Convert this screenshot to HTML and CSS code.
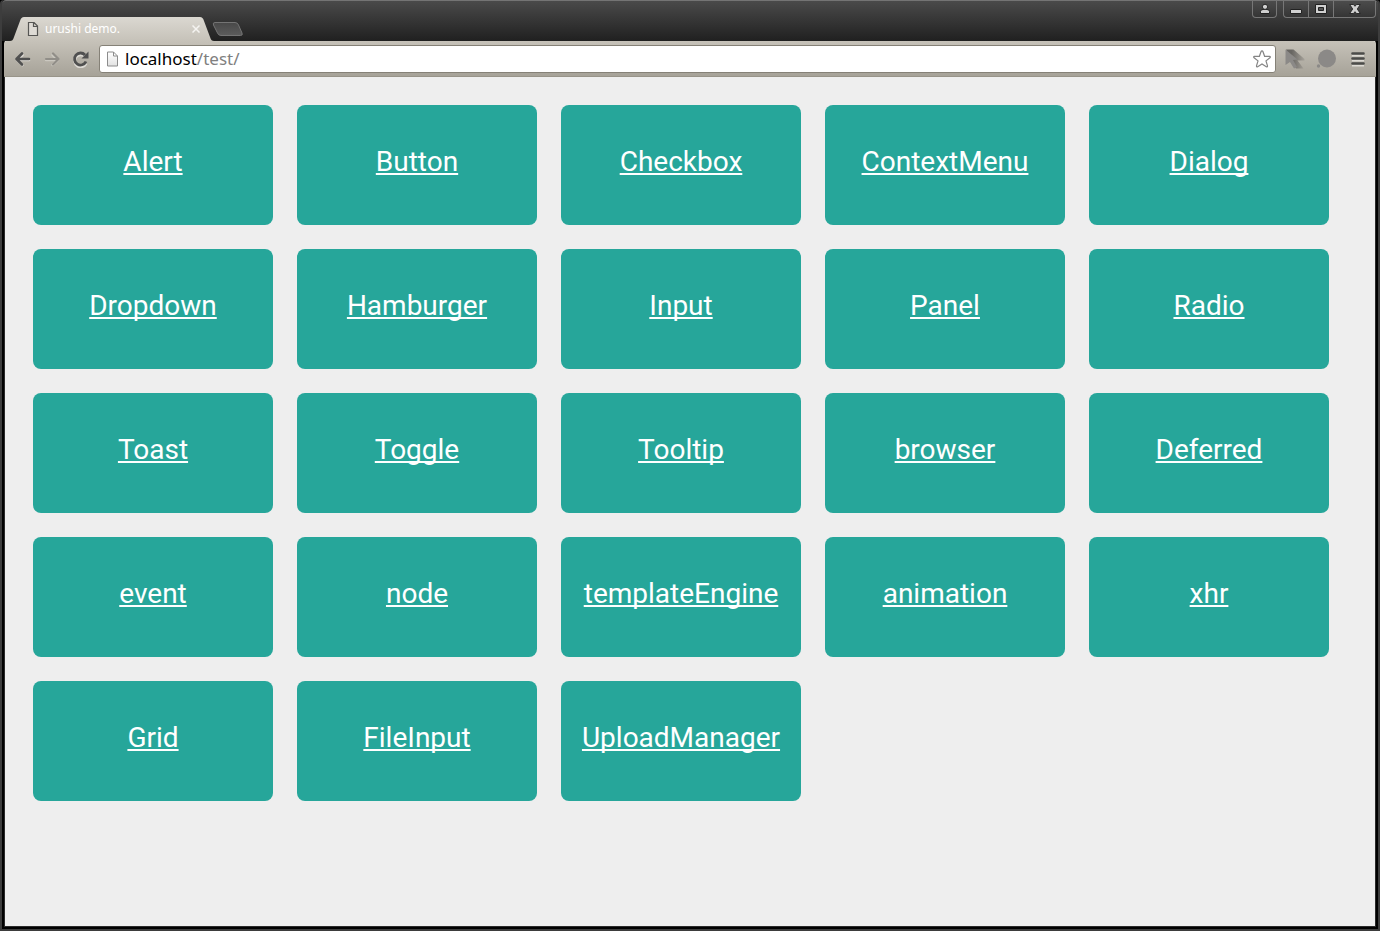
FILE: index.html
```html
<!DOCTYPE html>
<html lang="en">
<head>
<meta charset="utf-8">
<title>urushi demo.</title>
<link rel="stylesheet" href="styles.css">
</head>
<body>
<div class="window">
  <header class="titlebar">
    <div class="tab">
      <svg class="tab-shape" viewBox="0 0 204 24" preserveAspectRatio="none" aria-hidden="true">
        <defs><linearGradient id="tabfill" x1="0" y1="0" x2="0" y2="1"><stop offset="0" stop-color="#dbd8d1"/><stop offset="1" stop-color="#c6c2b9"/></linearGradient></defs>
        <path d="M0 24C2 24 3 23 4 20L10 4C11 1 12 0 14 0H190C192 0 193 1 194 4L200 20C201 23 202 24 204 24Z" fill="url(#tabfill)"/>
      </svg>
      <svg class="tab-icon" width="12" height="14" viewBox="0 0 12 14" aria-hidden="true"><path d="M1.500.5H7L10.500 4V13.500H1.500ZM6.500.5V4.500H10.500" fill="#dedbd5" stroke="#565654" stroke-width="1.200"/></svg>
      <span class="tab-title">urushi demo.</span>
      <button class="tab-close" aria-label="Close tab"><svg width="8" height="8" viewBox="0 0 8 8"><path d="M.5.5L7.500 7.500M7.500.5L.5 7.500" stroke="#f5f4f1" stroke-width="1.500"/></svg></button>
    </div>
    <button class="new-tab" aria-label="New tab"><svg width="32" height="16" viewBox="0 0 32 16"><defs><linearGradient id="newfill" x1="0" y1="0" x2="0" y2="1"><stop offset="0" stop-color="#484848"/><stop offset="1" stop-color="#5c5c5c"/></linearGradient></defs><path d="M3 1.500H23Q25.500 1.500 26.500 4L30 12Q31 14.500 28.500 14.500H9Q6.500 14.500 5.500 12L1.500 4Q.5 1.500 3 1.500Z" fill="url(#newfill)" stroke="#747474"/></svg></button>
    <div class="controls">
      <button class="control user" aria-label="User"><svg width="12" height="12" viewBox="0 0 12 12"><path d="M1.500 10.500V8.500Q1.500 6.500 4 6.500H8Q10.500 6.500 10.500 8.500V10.500Z" fill="#d0d0d0" stroke="#222"/><circle cx="6" cy="3.800" r="2.600" fill="#d0d0d0" stroke="#222"/></svg></button>
      <div class="control-group">
        <button class="control" aria-label="Minimize"><svg width="12" height="12" viewBox="0 0 12 12"><path d="M.5 6.500H11.500V10.500H.5Z" fill="#d0d0d0" stroke="#222"/></svg></button>
        <button class="control" aria-label="Maximize"><svg width="12" height="12" viewBox="0 0 12 12"><path d="M.5 1.500H11.500V10.500H.5Z" fill="#d0d0d0" stroke="#222"/><path d="M3.500 4.500H8.500V7.500H3.500Z" fill="#555" stroke="#222"/></svg></button>
        <button class="control close" aria-label="Close"><svg width="12" height="12" viewBox="0 0 12 12"><path d="M.7 1.500H4.500L6 3.300 7.500 1.500H11.300L8.300 6 11.300 10.500H7.500L6 8.700 4.500 10.500H.7L3.700 6Z" fill="#d0d0d0" stroke="#222" stroke-width=".9"/></svg></button>
      </div>
    </div>
  </header>
  <div class="browser">
    <nav class="toolbar" aria-label="Browser">
      <button class="tool" aria-label="Back"><svg width="18" height="18" viewBox="0 0 18 18"><g fill="none" stroke-linecap="round" stroke-linejoin="round"><path d="M8.500 5L3 10 8.500 15M3 10H15" stroke="#dedbd5" stroke-width="2.600"/><path d="M8 3.500L2.500 9 8 14.500M3 9H15" stroke="#505050" stroke-width="2.600"/></g></svg></button>
      <button class="tool" aria-label="Forward" disabled><svg width="18" height="18" viewBox="0 0 18 18"><g fill="none" stroke-linecap="round" stroke-linejoin="round"><path d="M9.500 5L15 10 9.500 15M15 10H3" stroke="#cbc8c0" stroke-width="2.400"/><path d="M10 3.500L15.500 9 10 14.500M15 9H3" stroke="#918e88" stroke-width="2.200"/></g></svg></button>
      <button class="tool" aria-label="Reload"><svg width="18" height="18" viewBox="0 0 18 18"><path d="M14 12.500A6 6 0 1 1 13 5.500" transform="translate(0 1)" fill="none" stroke="#dedbd5" stroke-width="3"/><path d="M14 11.500A6 6 0 1 1 13 5" fill="none" stroke="#505050" stroke-width="2.800"/><path d="M16.500 1.500V8.500H9.500Z" fill="#505050"/></svg></button>
      <form class="address">
        <svg width="13" height="16" viewBox="0 0 13 16" aria-hidden="true"><defs><linearGradient id="page" x1="0" y1="0" x2="0" y2="1"><stop offset="0" stop-color="#fff"/><stop offset="1" stop-color="#e2e2e2"/></linearGradient></defs><path d="M1.500 1H7.500L11.500 5V15H1.500ZM7.500 1V5H11.500" fill="url(#page)" stroke="#8c8c8c"/></svg>
        <a class="url" href="#">localhost<span class="path">/test/</span></a>
        <button class="star" type="button" aria-label="Bookmark"><svg width="20" height="20" viewBox="0 0 20 20"><path d="M10 1.800Q10.700 1.800 11 2.700L12.600 7.300 17.500 7.400Q19 7.700 17.900 8.800L14 11.900 15.500 16.800Q15.600 18.300 14.300 17.700L10 14.900 5.700 17.700Q4.400 18.300 4.500 16.800L6 11.900 2.100 8.800Q1 7.700 2.500 7.400L7.400 7.300 9 2.700Q9.300 1.800 10 1.800Z" fill="#fff" stroke="#858585" stroke-width="1.200"/></svg></button>
      </form>
      <button class="extension" aria-label="Pointer extension"><svg width="20" height="20" viewBox="0 0 20 20"><defs><linearGradient id="shade" x1="0" y1="0" x2="1" y2="0"><stop offset=".3" stop-color="#686662"/><stop offset="1" stop-color="#a5a199"/></linearGradient></defs><path d="M1 .5H8.500L19.500 10V11.500H12.500L18.500 19.500H11L5 11Z" fill="url(#shade)"/><path d="M.5.500L12.500 10.500L8 11L12 18L9 19.500L5 13L.5 16Z" fill="#8b8987"/></svg></button>
      <button class="extension balloon" aria-label="Balloon extension"><svg width="20" height="20" viewBox="0 0 20 20"><circle cx="11" cy="9.500" r="9" fill="#8b8987"/><circle cx="2.500" cy="17" r="1.700" fill="#8b8987"/></svg></button>
      <button class="menu" aria-label="Menu"><svg width="14" height="16" viewBox="0 0 14 16"><path d="M1 4.500H13M1 9.500H13M1 14.500H13" stroke="#dedbd5" stroke-width="2"/><path d="M1.500 2.500H12.500M1.500 7.500H12.500M1.500 12.500H12.500" stroke="#4c4c4a" stroke-width="2.600" stroke-linecap="round"/></svg></button>
    </nav>
    <main class="tiles">
      <div class="tile"><a href="#">Alert</a></div>
      <div class="tile"><a href="#">Button</a></div>
      <div class="tile"><a href="#">Checkbox</a></div>
      <div class="tile"><a href="#">ContextMenu</a></div>
      <div class="tile"><a href="#">Dialog</a></div>
      <div class="tile"><a href="#">Dropdown</a></div>
      <div class="tile"><a href="#">Hamburger</a></div>
      <div class="tile"><a href="#">Input</a></div>
      <div class="tile"><a href="#">Panel</a></div>
      <div class="tile"><a href="#">Radio</a></div>
      <div class="tile"><a href="#">Toast</a></div>
      <div class="tile"><a href="#">Toggle</a></div>
      <div class="tile"><a href="#">Tooltip</a></div>
      <div class="tile"><a href="#">browser</a></div>
      <div class="tile"><a href="#">Deferred</a></div>
      <div class="tile"><a href="#">event</a></div>
      <div class="tile"><a href="#">node</a></div>
      <div class="tile"><a href="#">templateEngine</a></div>
      <div class="tile"><a href="#">animation</a></div>
      <div class="tile"><a href="#">xhr</a></div>
      <div class="tile"><a href="#">Grid</a></div>
      <div class="tile"><a href="#">FileInput</a></div>
      <div class="tile"><a href="#">UploadManager</a></div>
    </main>
  </div>
</div>
</body>
</html>
```

FILE: styles.css
```css
* { box-sizing: border-box; }
body { margin: 0; background: #000; font-family: Roboto, sans-serif; }
button { display: flex; align-items: center; justify-content: center; padding: 0; border: 0; background: none; }
svg { display: block; flex: none; }

.window {
  display: flex;
  flex-direction: column;
  min-height: 100vh;
  padding-bottom: 2px;
  border: 2px solid #3d3d3d;
  border-top: 0;
  border-radius: 4px 4px 0 0;
}
.titlebar {
  display: flex;
  align-items: flex-end;
  height: 41px;
  padding-left: 8px;
  border-top: 1px solid #747474;
  border-radius: 4px 4px 0 0;
  background: linear-gradient(#4a4a4a, #202020);
}
.tab {
  position: relative;
  display: flex;
  align-items: center;
  width: 204px;
  height: 24px;
  padding: 0 14px 0 17px;
}
.tab-shape { position: absolute; inset: 0; width: 100%; height: 100%; }
.tab-icon, .tab-title, .tab-close { position: relative; }
.tab-title {
  flex: 1;
  margin-left: 6px;
  color: #fff;
  font: 12px/24px "Noto Sans", sans-serif;
  white-space: nowrap;
}
.new-tab { margin: 0 0 4px -2px; }
.controls { display: flex; gap: 6px; align-self: flex-start; margin-left: auto; padding-right: 2px; }
.control-group { display: flex; }
.control {
  width: 25px;
  height: 17px;
  border: 1px solid #777;
  border-top: 0;
  background: linear-gradient(#4c4c4c, #353535);
}
.control.user { border-radius: 0 0 4px 4px; }
.control-group .control { border-right: 0; }
.control-group .control:first-child { border-radius: 0 0 0 4px; }
.control-group .close { width: 43px; border-right: 1px solid #777; border-radius: 0 0 4px 0; }

.browser {
  flex: 1;
  display: flex;
  flex-direction: column;
  margin: 0 2px;
  border: 1px solid #2a2a2a;
  border-top: 0;
  background: #eee;
}
.toolbar {
  display: flex;
  align-items: center;
  height: 36px;
  margin: 0 -1px;
  padding: 0 11px 0 10px;
  border-bottom: 1px solid #989489;
  border-radius: 3px 3px 0 0;
  background: linear-gradient(#c6c2b9, #a6a298);
}
.tool { width: 18px; margin-right: 11px; }
.tool:nth-child(3) { margin-right: 9px; }
.address {
  flex: 1;
  display: flex;
  align-items: center;
  height: 28px;
  padding: 0 3px 0 6px;
  border: 1px solid #858177;
  border-radius: 3px;
  background: #fff;
}
.url {
  flex: 1;
  margin-left: 6px;
  color: #000;
  font: 17px/24px "Noto Sans", sans-serif;
  text-decoration: none;
}
.path { color: #808080; }
.extension { margin-left: 9px; }
.balloon { margin-left: 11px; }
.menu { margin-left: 15px; }

.tiles { display: flex; flex-wrap: wrap; gap: 24px; padding: 28px; }
.tile {
  width: 240px;
  height: 120px;
  border-radius: 8px;
  background: #26a69a;
  font-size: 28px;
  line-height: 114px;
  text-align: center;
}
.tile a {
  color: #fff;
  text-decoration: underline;
  text-decoration-thickness: 2px;
  text-decoration-skip-ink: none;
  text-underline-offset: 2px;
}
```
